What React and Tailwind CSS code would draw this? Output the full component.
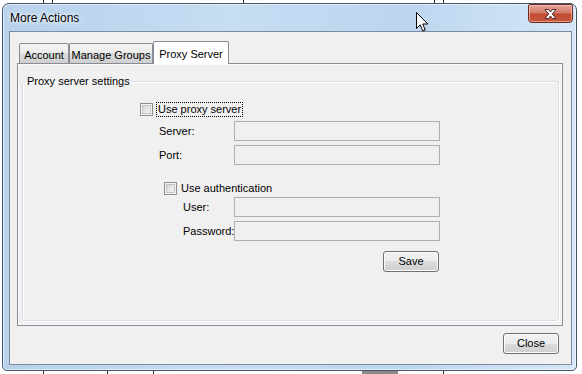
import React from 'react';

const TextBox = () => (
  <div className="w-[206px] h-[20px] border border-[#acafb2] bg-[#f0f0f0]" />
);

const CheckBox = () => (
  <span className="w-[13px] h-[13px] shrink-0 border border-[#8f8f8f] bg-[#f4f4f4] p-[1px] flex">
    <span className="flex-1 border border-[#c4c4c4] bg-gradient-to-br from-[#d6d6d6] to-[#f6f6f6]" />
  </span>
);

const WinButton = ({ children }) => (
  <button
    type="button"
    className="h-[21px] w-[56px] rounded-[3px] border border-[#707070] bg-[linear-gradient(#f2f2f2,#ebebeb_50%,#dddddd_50%,#cfcfcf)] shadow-[inset_0_0_0_1px_#fbfbfb] text-[11px] leading-[19px] text-black"
  >
    {children}
  </button>
);

const Tab = ({ label, width, active }) =>
  active ? (
    <div className={`${width} h-[23px] -mb-[1px] relative z-10 border border-b-0 border-[#898c95] bg-white rounded-t-[2px] flex justify-center pt-[4px]`}>
      {label}
    </div>
  ) : (
    <div className={`${width} h-[20px] border border-b-0 border-[#898c95] bg-[linear-gradient(#f3f3f3,#ebebeb_50%,#dddddd_50%,#cfcfcf)] rounded-t-[2px] flex justify-center pt-[3px]`}>
      {label}
    </div>
  );

// bits of the spreadsheet peeking out behind the dialog
const backLines = [
  { top: true, x: 43 },
  { top: true, x: 52 },
  { top: true, x: 243 },
  { top: true, x: 434 },
  { top: true, x: 443 },
  { top: false, x: 43 },
  { top: false, x: 107 },
  { top: false, x: 153 },
  { top: false, x: 443 },
];

export default function App() {
  return (
    <div className="w-[582px] h-[374px] bg-white relative overflow-hidden pl-[2px] pt-[3px] font-['Liberation_Sans',Arial,sans-serif] text-[11px] text-black">
      {backLines.map((l, i) => (
        <div
          key={i}
          className={`absolute w-[1px] bg-[#303030] ${l.top ? 'top-0 h-[4px]' : 'bottom-0 h-[5px]'}`}
          style={{ left: l.x }}
        />
      ))}
      <div className="absolute bottom-0 left-[362px] w-[36px] h-[4px] bg-[#8a8a8a]" />

      {/* window */}
      <div className="relative w-[575px] h-[368px] rounded-t-[7px] rounded-b-[5px] border border-[#46566a] bg-[linear-gradient(90deg,#b8d2ec,#c6ddf3_40%,#bcd6ef_70%,#d4e7f8)] shadow-[inset_0_0_0_1px_rgba(255,255,255,0.55)] flex flex-col">
        {/* title bar */}
        <div className="h-[27px] flex items-start">
          <div className="flex-1 h-full flex items-center pl-[7px] text-[12px] text-black [text-shadow:0_0_6px_#fff,0_0_3px_#fff]">
            More Actions
          </div>
          <div className="w-[45px] h-[19px] mr-[3px] rounded-b-[4px] rounded-t-[2px] border border-[#6b2a22] bg-[linear-gradient(#e8a597,#d27a69_45%,#c24a33_55%,#c8583f)] shadow-[inset_0_0_0_1px_rgba(255,220,210,0.5)] flex items-center justify-center">
            <svg width="15" height="12" viewBox="0 0 15 12">
              <path
                d="M2 1.5 L5.5 1.5 L7.5 4 L9.5 1.5 L13 1.5 L9.3 6 L13 10.5 L9.5 10.5 L7.5 8 L5.5 10.5 L2 10.5 L5.7 6 Z"
                fill="#fff"
                stroke="#4a2a28"
                strokeWidth="1"
                strokeLinejoin="round"
              />
            </svg>
          </div>
        </div>

        {/* client area */}
        <div className="ml-[6px] mr-[4px] mb-[5px] flex-1 border border-[#7d8b9c] bg-[#f0f0f0] pt-[9px] px-[7px]">
          {/* tabs */}
          <div className="flex items-end h-[22px] pl-[2px]">
            <Tab label="Account" width="w-[50px]" />
            <Tab label="Manage Groups" width="w-[84px]" />
            <Tab label="Proxy Server" width="w-[76px]" active />
          </div>

          {/* tab page */}
          <div className="w-[546px] h-[263px] border border-[#898c95] bg-[#f0f0f0] shadow-[inset_0_0_0_1px_#fafafa] pt-[11px] pl-[4px] pr-[3px]">
            <fieldset className="h-[246px] border border-[#d5dfe5] rounded-[3px] shadow-[inset_1px_1px_0_#fff,1px_1px_0_#fff]">
              <legend className="ml-[3px] px-[1px] leading-[13px]">Proxy server settings</legend>

              <div className="pl-[117px] pt-[14px]">
                <div className="flex items-center h-[15px] gap-[3px]">
                  <CheckBox />
                  <span className="h-[15px] px-[1px] leading-[13px] border border-dotted border-black">Use proxy server</span>
                </div>

                <div className="flex items-center mt-[4px] pl-[19px]">
                  <span className="w-[75px]">Server:</span>
                  <TextBox />
                </div>
                <div className="flex items-center mt-[4px] pl-[19px]">
                  <span className="w-[75px]">Port:</span>
                  <TextBox />
                </div>

                <div className="flex items-center h-[15px] gap-[4px] mt-[16px] pl-[24px]">
                  <CheckBox />
                  <span className="leading-[13px]">Use authentication</span>
                </div>

                <div className="flex items-center mt-[1px] pl-[43px]">
                  <span className="w-[51px]">User:</span>
                  <TextBox />
                </div>
                <div className="flex items-center mt-[4px] pl-[43px]">
                  <span className="w-[51px]">Password:</span>
                  <TextBox />
                </div>

                <div className="mt-[10px] pl-[243px]">
                  <WinButton>Save</WinButton>
                </div>
              </div>
            </fieldset>
          </div>

          <div className="flex justify-end mt-[7px] pr-[5px]">
            <WinButton>Close</WinButton>
          </div>
        </div>

        {/* mouse pointer */}
        <svg className="absolute left-[413px] top-[8px]" width="13" height="21" viewBox="0 0 13 21">
          <path
            d="M0.5 0.5 L0.5 16.5 L4.3 12.8 L6.8 19 L9.2 18 L6.8 12 L11.8 12 Z"
            fill="#fff"
            stroke="#000"
            strokeWidth="1"
            strokeLinejoin="miter"
          />
        </svg>
      </div>
    </div>
  );
}
